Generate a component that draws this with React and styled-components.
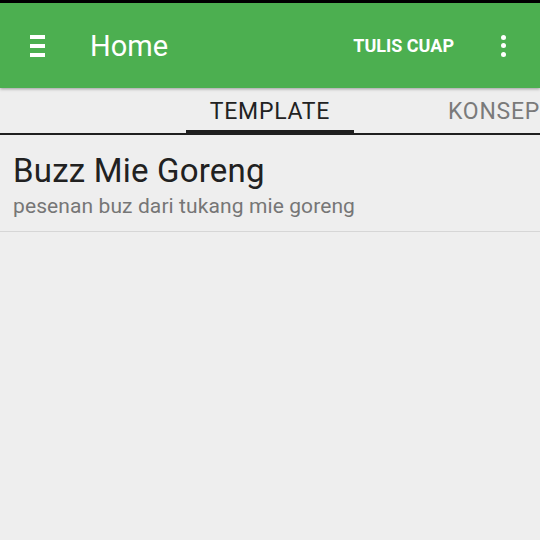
import React from "react";
import styled, { createGlobalStyle } from "styled-components";

const Global = createGlobalStyle`
  html, body { margin: 0; padding: 0; background: #eeeeee; }
  body { font-family: Roboto, "Noto Sans", sans-serif; }
  * { box-sizing: border-box; }
`;

const Screen = styled.div`
  width: 540px;
  height: 540px;
  background: #eeeeee;
  overflow: hidden;
  display: flex;
  flex-direction: column;
`;

const StatusBar = styled.div`
  height: 3px;
  background: #000;
`;

const AppBar = styled.header`
  height: 85px;
  background: #4caf50;
  display: flex;
  align-items: center;
  padding: 0 34px 0 30px;
  position: relative;
  z-index: 1;
  box-shadow: 0 1px 3px rgba(0, 0, 0, 0.35);
  color: #fff;
`;

const MenuIcon = styled.div`
  width: 15px;
  display: flex;
  flex-direction: column;
  gap: 5px;
  margin-right: 45px;
  span {
    display: block;
    height: 4px;
    background: #fff;
  }
`;

const Title = styled.h1`
  margin: 0;
  font-size: 29px;
  font-weight: 400;
  flex: 1;
  letter-spacing: 0;
`;

const Action = styled.button`
  background: none;
  border: 0;
  color: #fff;
  font-family: Roboto, sans-serif;
  font-weight: 700;
  font-size: 18px;
  letter-spacing: 0;
  padding: 0;
  margin-right: 47px;
`;

const Overflow = styled.div`
  display: flex;
  flex-direction: column;
  gap: 3.5px;
  span {
    width: 5px;
    height: 5px;
    border-radius: 50%;
    background: #fff;
  }
`;

const TabStrip = styled.nav`
  height: 47px;
  display: flex;
  align-items: stretch;
  padding-left: 186px;
  border-bottom: 2px solid #1f1f1f;
  white-space: nowrap;
`;

const Tab = styled.div`
  position: relative;
  width: ${(p) => p.$width}px;
  margin-left: ${(p) => p.$offset || 0}px;
  display: flex;
  align-items: center;
  justify-content: ${(p) => (p.$active ? "center" : "flex-start")};
  padding-top: 2px;
  font-size: 23px;
  letter-spacing: 0.75px;
  color: ${(p) => (p.$active ? "#222222" : "#7a7a7a")};
  flex-shrink: 0;
  &::after {
    content: "";
    display: ${(p) => (p.$active ? "block" : "none")};
    position: absolute;
    left: 0;
    right: 0;
    bottom: -2px;
    height: 5px;
    background: #1f1f1f;
  }
`;

const Item = styled.div`
  padding: 17px 13px 12px;
  border-bottom: 1px solid #d6d6d6;
`;

const ItemTitle = styled.div`
  font-size: 33px;
  letter-spacing: 0.2px;
  color: #212121;
  line-height: 38px;
`;

const ItemSub = styled.div`
  font-size: 21px;
  letter-spacing: 0.1px;
  color: #767676;
  line-height: 26px;
  margin-top: 3px;
`;

export default function App() {
  return (
    <>
      <Global />
      <Screen>
        <StatusBar />
        <AppBar>
          <MenuIcon>
            <span />
            <span />
            <span />
          </MenuIcon>
          <Title>Home</Title>
          <Action>TULIS CUAP</Action>
          <Overflow>
            <span />
            <span />
            <span />
          </Overflow>
        </AppBar>
        <TabStrip>
          <Tab $active $width={168}>TEMPLATE</Tab>
          <Tab $width={120} $offset={94}>KONSEP</Tab>
        </TabStrip>
        <Item>
          <ItemTitle>Buzz Mie Goreng</ItemTitle>
          <ItemSub>pesenan buz dari tukang mie goreng</ItemSub>
        </Item>
      </Screen>
    </>
  );
}
